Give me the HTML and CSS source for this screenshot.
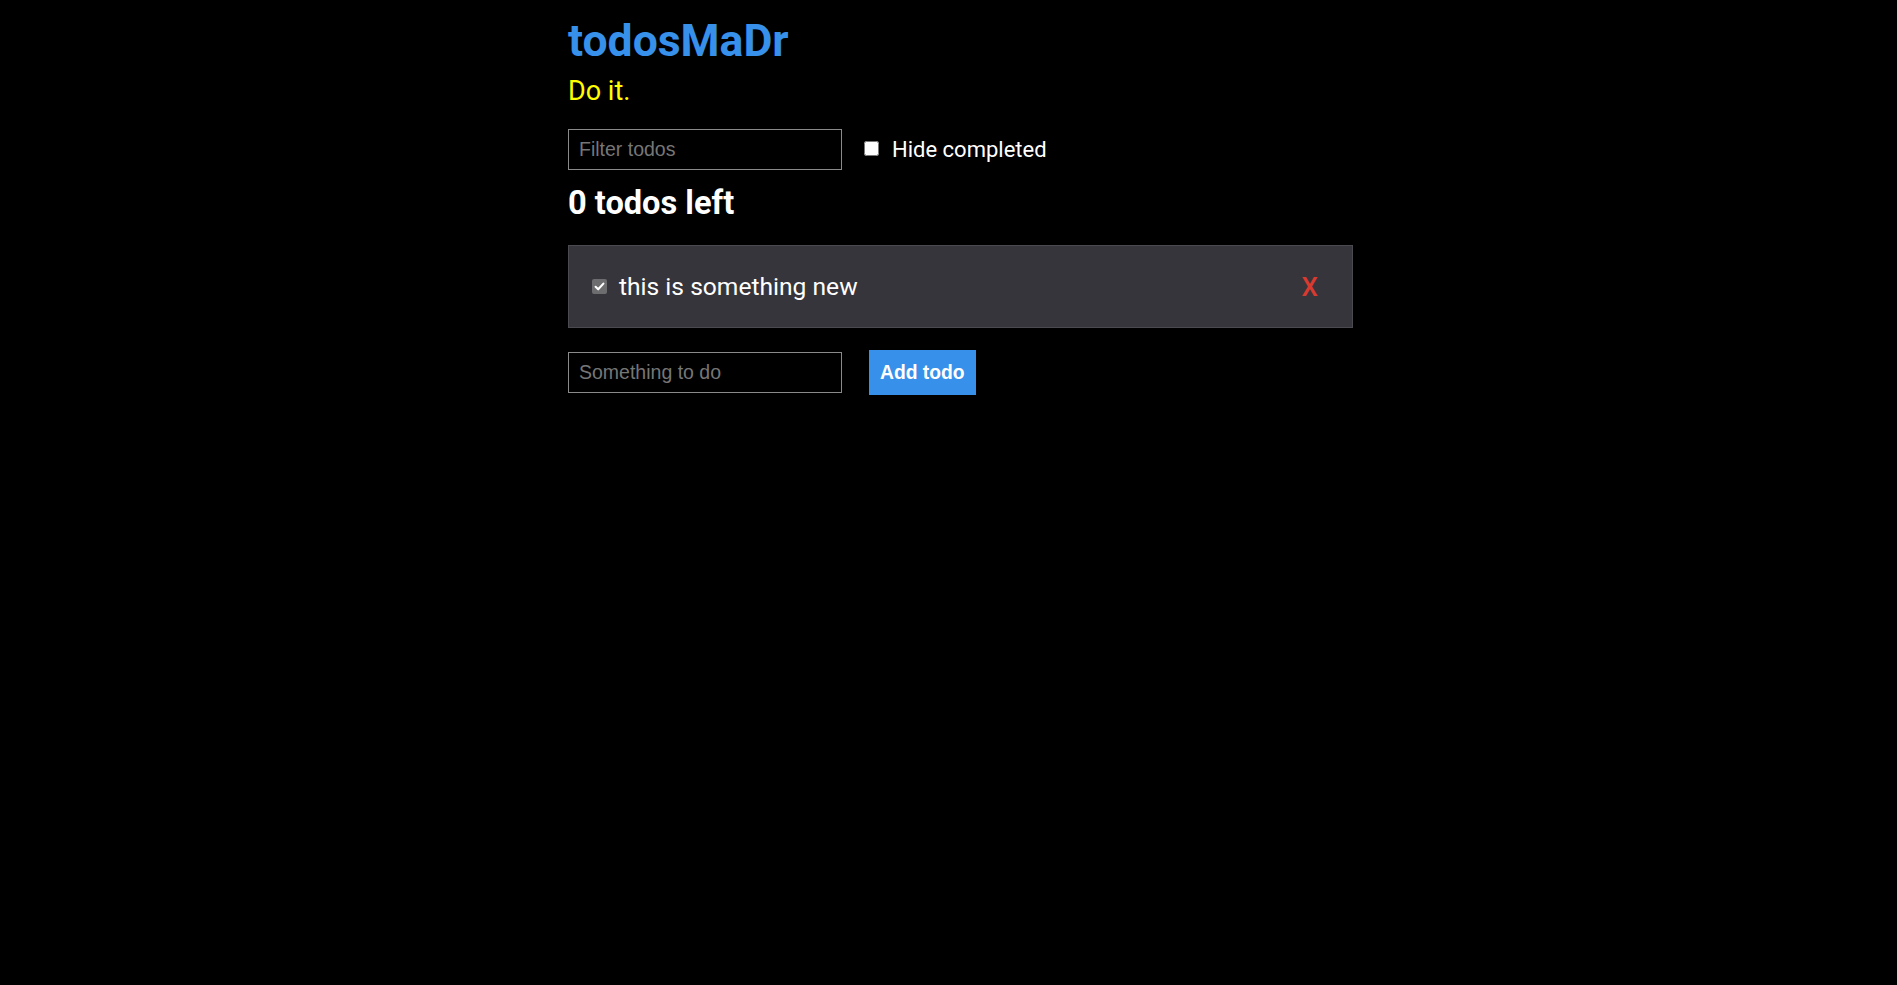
FILE: index.html
```html
<!DOCTYPE html>
<html lang="en">
<head>
<meta charset="utf-8">
<title>todosMaDr</title>
<link rel="stylesheet" href="styles.css">
</head>
<body>
<main class="app">
  <h1 class="title">todosMaDr</h1>
  <p class="tagline">Do it.</p>
  <div class="filter-row">
    <input class="text-input" type="text" placeholder="Filter todos">
    <label class="hide-label"><input class="hide-check" type="checkbox"><span>Hide completed</span></label>
  </div>
  <h2 class="count">0 todos left</h2>
  <ul class="todo-list">
    <li class="todo">
      <span class="todo-check" role="checkbox" aria-checked="true">
        <svg viewBox="0 0 15 15" width="15" height="15"><path d="M3.6 7.8 L6.2 10.3 L11.4 4.6" fill="none" stroke="#ffffff" stroke-width="2.1" stroke-linecap="round" stroke-linejoin="round"/></svg>
      </span>
      <span class="todo-text">this is something new</span>
      <button class="delete" type="button">X</button>
    </li>
  </ul>
  <form class="add-row">
    <input class="text-input" type="text" placeholder="Something to do">
    <button class="add-btn" type="button">Add todo</button>
  </form>
</main>
</body>
</html>
```
FILE: styles.css
```css
html, body {
  margin: 0;
  padding: 0;
  background: #000000;
}
body {
  font-family: Roboto, "Liberation Sans", sans-serif;
  color: #ffffff;
}
.app {
  width: 785px;
  margin-left: 568px;
  padding-top: 15px;
}
.title {
  margin: 0;
  font-size: 44.5px;
  font-weight: 700;
  line-height: 52px;
  color: #3790ea;
}
.tagline {
  margin: 9px 0 0;
  font-size: 27px;
  line-height: 30px;
  color: #ffff00;
}
.filter-row {
  display: flex;
  align-items: center;
  margin-top: 23px;
}
.text-input {
  box-sizing: border-box;
  width: 274px;
  height: 41px;
  margin: 0;
  padding: 0 10px;
  background: #000000;
  border: 1px solid #8a8a8a;
  border-radius: 0;
  color: #ffffff;
  font-family: "Liberation Sans", Arial, sans-serif;
  font-size: 19.5px;
  outline: none;
}
.text-input::placeholder {
  color: #767676;
}
.hide-label {
  display: flex;
  align-items: center;
  margin-left: 22px;
  font-size: 22px;
  line-height: 26px;
}
.hide-check {
  width: 15px;
  height: 15px;
  margin: 0 13px 0 0;
  position: relative;
  top: -1px;
}
.count {
  margin: 14px 0 0;
  font-size: 32.6px;
  font-weight: 700;
  line-height: 38px;
}
.todo-list {
  list-style: none;
  margin: 23px 0 0;
  padding: 0;
}
.todo {
  box-sizing: border-box;
  height: 83px;
  display: flex;
  align-items: center;
  padding: 0 34px 0 23px;
  background: #37353c;
  border: 1px solid #4c4a51;
}
.todo-check {
  display: block;
  width: 15px;
  height: 15px;
  border-radius: 2px;
  background: #6d6d6f;
  flex: none;
}
.todo-check svg {
  display: block;
}
.todo-text {
  margin-left: 12px;
  font-size: 24.6px;
  line-height: 28px;
  flex: 1;
}
.delete {
  padding: 0;
  margin: 0;
  border: none;
  background: transparent;
  color: #d93a2f;
  font-family: Roboto, "Liberation Sans", sans-serif;
  font-size: 26px;
  font-weight: 500;
  line-height: 30px;
  cursor: pointer;
}
.add-row {
  display: flex;
  align-items: center;
  margin: 22px 0 0;
}
.add-btn {
  box-sizing: border-box;
  height: 45px;
  margin-left: 27px;
  padding: 0 11px;
  border: none;
  border-radius: 0;
  background: #3790ea;
  color: #ffffff;
  font-family: "Liberation Sans", Arial, sans-serif;
  font-size: 19.3px;
  font-weight: 700;
  cursor: pointer;
}
```
